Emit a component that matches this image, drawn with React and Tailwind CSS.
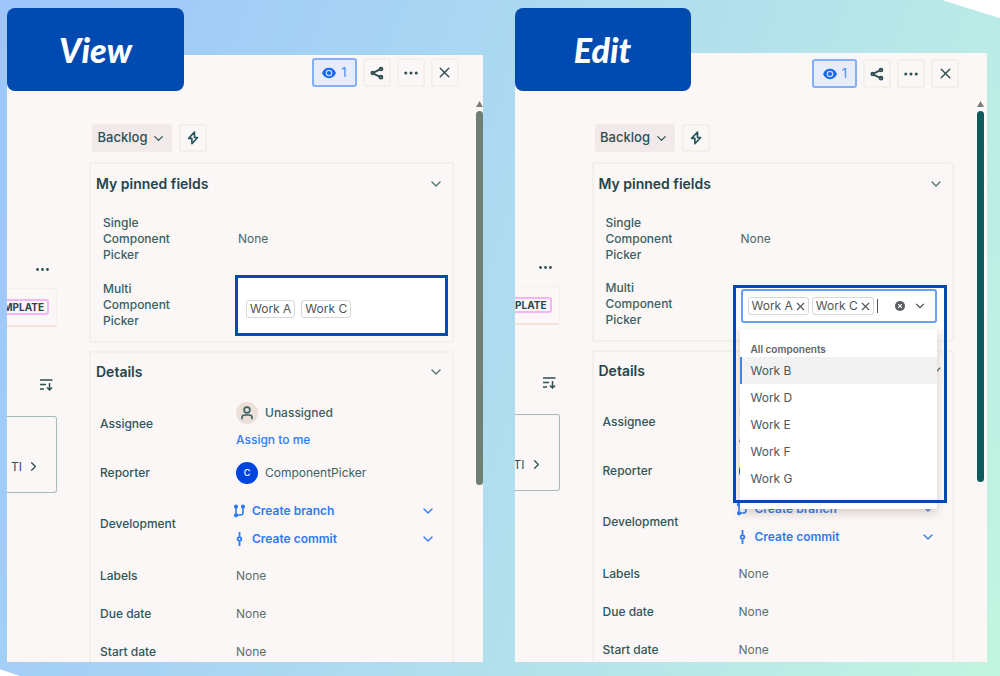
import React, { useState } from 'react';
import { ChevronDown, ChevronRight, Ellipsis, X } from 'lucide-react';

const COMPONENTS = ['Work A', 'Work B', 'Work C', 'Work D', 'Work E', 'Work F', 'Work G'];

// ===========================
// ICONS
// ===========================
function EyeIcon() {
  return (
    <svg width="16" height="16" viewBox="0 0 16 16" aria-hidden="true">
      <path d="M1 8C2.4 4.6 4.9 2.8 8 2.8S13.600 4.600 15 8c-1.400 3.400-3.900 5.200-7 5.200S2.400 11.400 1 8z" fill="#1868f2" />
      <circle cx="8" cy="8" r="2.700" fill="none" stroke="#c9dafb" strokeWidth="1.200" />
    </svg>
  );
}

function ShareIcon() {
  return (
    <svg width="16" height="16" viewBox="0 0 16 16" fill="none" stroke="currentColor" strokeWidth="1.900" aria-hidden="true">
      <path d="M5 7.400l5.500-2.800M5 8.800l5.500 2.800" />
      <circle cx="3.700" cy="8.100" r="1.300" />
      <circle cx="12" cy="4" r="1.400" />
      <circle cx="12" cy="12.200" r="1.400" />
    </svg>
  );
}

function BoltIcon() {
  return (
    <svg width="16" height="16" viewBox="0 0 16 16" fill="none" stroke="currentColor" strokeWidth="1.600" strokeLinejoin="round" aria-hidden="true">
      <path d="M9.500 2L3.600 8.400h3.300v5.400l5.700-6.300H9.500z" />
    </svg>
  );
}

function SortIcon() {
  return (
    <svg width="16" height="16" viewBox="0 0 16 16" fill="none" stroke="currentColor" strokeWidth="1.500" aria-hidden="true">
      <path d="M2 3h12.500M2 7.500h6M2 12h4" />
      <path d="M11.500 6v7M9 10.500l2.500 2.500 2.500-2.500" />
    </svg>
  );
}

function PersonIcon() {
  return (
    <svg width="16" height="16" viewBox="0 0 16 16" fill="none" stroke="currentColor" strokeWidth="1.600" aria-hidden="true">
      <circle cx="8" cy="5" r="2.900" />
      <path d="M3 14.200v-1.600c0-1.500 1.200-2.600 2.700-2.600h4.600c1.500 0 2.700 1.100 2.700 2.600v1.600" />
    </svg>
  );
}

function BranchIcon() {
  return (
    <svg width="13" height="14" viewBox="0 0 13 14" fill="none" stroke="currentColor" strokeWidth="1.600" aria-hidden="true">
      <path d="M3 3v8h4.500a2.500 2.500 0 0 0 2.500-2.500V3" />
      <circle cx="3" cy="2.700" r="1.300" fill="currentColor" />
      <circle cx="10" cy="2.700" r="1.300" fill="currentColor" />
      <circle cx="3" cy="11.300" r="1.300" fill="currentColor" />
    </svg>
  );
}

function CommitIcon() {
  return (
    <svg width="13" height="14" viewBox="0 0 13 14" fill="none" stroke="currentColor" strokeWidth="1.800" aria-hidden="true">
      <path d="M6.500 0v4.500M6.500 9.500V14" />
      <circle cx="6.500" cy="7" r="1.800" />
    </svg>
  );
}

function ClearIcon() {
  return (
    <svg width="12" height="12" viewBox="0 0 12 12" aria-hidden="true">
      <circle cx="6" cy="6" r="5" fill="#575c60" />
      <path d="M4.200 4.200l3.600 3.600M7.800 4.200L4.200 7.800" stroke="#fff" strokeWidth="1.200" />
    </svg>
  );
}

// ===========================
// PARTS
// ===========================
function Toolbar({ className }) {
  const square =
    'w-7 h-[29px] flex items-center justify-center rounded-[3px] border-2 border-[#f4efe9] text-[#2f4f52]';
  return (
    <div className={`flex justify-end ${className}`}>
      <button
        aria-label="Watchers"
        className="w-[45px] h-[29px] flex items-center justify-center gap-1 rounded-[3px] border-2 border-[#84aff8] bg-[#e8ebf8] text-[13px] text-[#4a8bf5]"
      >
        <EyeIcon />1
      </button>
      <button aria-label="Share" className={square}><ShareIcon /></button>
      <button aria-label="More" className={square}><Ellipsis size={18} /></button>
      <button aria-label="Close" className={square}><X size={17} strokeWidth={2} /></button>
    </div>
  );
}

// Slice of the board that stays visible behind the issue
function BoardEdge({ className }) {
  return (
    <div className={`shrink-0 overflow-hidden pt-[206px] text-[#2f4f52] ${className}`}>
      <div className="flex justify-end pr-1.5"><Ellipsis size={17} /></div>
      <div className="mt-2.5 h-[39px] flex items-center justify-end pr-[7px] rounded-r-[3px] border border-l-0 border-[#f4f0eb] border-b-2 border-b-[#efe3db]">
        <span className="px-[3px] rounded-[3px] border-2 border-[#f3b5f6] text-[10px] leading-3 font-bold text-[#2b474b]">
          TEMPLATE
        </span>
      </div>
      <div className="mt-[50px] flex justify-end pr-[3px]"><SortIcon /></div>
      <div className="mt-[23px] h-[77px] pt-6 flex items-center justify-end gap-1 pr-[15px] rounded-r-[3px] border border-l-0 border-[#a9b9b3] text-[12px]">
        <span>TI</span>
        <ChevronRight size={15} className="shrink-0" />
      </div>
    </div>
  );
}

function Card({ title, headClass, children }) {
  return (
    <section className="rounded-[3px] border-2 border-[#f4efe9]">
      <div className={`flex items-center justify-between pl-[5px] pr-2 pb-[3px] ${headClass}`}>
        <h2 className="text-[14px] font-semibold text-[#24444a]">{title}</h2>
        <button aria-label={`Collapse ${title}`} className="text-[#56716f]">
          <ChevronDown size={16} />
        </button>
      </div>
      {children}
    </section>
  );
}

function PinnedRow({ label, className, children }) {
  return (
    <div className={`flex items-center ${className}`}>
      <div className="w-[147px] shrink-0 pl-3">
        <p className="w-20 text-[12px] leading-4 font-medium text-[#3c5f62]">{label}</p>
      </div>
      {children}
    </div>
  );
}

function DetailRow({ label, className, children }) {
  return (
    <div className={`flex items-center ${className}`}>
      <div className="w-[145px] shrink-0 pl-[9px] text-[12px] font-medium text-[#315659]">{label}</div>
      <div className="flex-1 text-[12px] text-[#5b716f]">{children}</div>
    </div>
  );
}

function DevAction({ icon, text }) {
  return (
    <div className="h-7 flex items-center text-[#2f7bf2]">
      <a href="#dev" className="flex items-center gap-1.5 font-semibold">
        {icon}
        {text}
      </a>
      <button aria-label={`${text} options`} className="ml-auto mr-4">
        <ChevronDown size={16} />
      </button>
    </div>
  );
}

function ViewField() {
  return (
    <div className="flex-1 h-[61px] -ml-[3px] mr-1 pt-[22px] pl-2 flex items-start gap-1.5 border-[3px] border-[#004ab0] bg-white">
      {['Work A', 'Work C'].map((name) => (
        <span key={name} className="px-[3px] rounded-[3px] border border-[#d5d8d8] text-[12px] leading-4 text-[#505558]">
          {name}
        </span>
      ))}
    </div>
  );
}

function EditField() {
  const [selected, setSelected] = useState(['Work A', 'Work C']);
  const options = COMPONENTS.filter((c) => !selected.includes(c));

  return (
    <div className="relative self-stretch flex-1">
      <div className="absolute z-10 top-[14px] -left-2 right-[5px]">
        <div className="h-11 pt-1 pl-2 pr-2.5 bg-white">
          <div className="h-[34px] flex items-center gap-[3px] pl-[5px] pr-2 rounded-[3px] border-2 border-[#6b9ff5] bg-white text-[#505558]">
            {selected.map((name) => (
              <span key={name} className="shrink-0 flex items-center gap-px pl-[3px] pr-px rounded-[3px] border border-[#d5d8d8] text-[12px] leading-4">
                {name}
                <button aria-label={`Remove ${name}`} onClick={() => setSelected(selected.filter((c) => c !== name))}>
                  <X size={13} />
                </button>
              </span>
            ))}
            <input aria-label="Multi Component Picker" className="min-w-0 flex-1 h-3.5 border-l border-[#505558] text-[12px] outline-none" />
            <button aria-label="Clear" onClick={() => setSelected([])}><ClearIcon /></button>
            <ChevronDown size={14} className="ml-1" />
          </div>
        </div>
        <div className="ml-[7px] mr-2.5 pt-3 pb-[17px] rounded-[3px] bg-white shadow-[0_4px_10px_rgba(120,80,60,0.25)]">
          <p className="pl-[11px] text-[10px] leading-4 font-semibold text-[#606468]">All components</p>
          <ul>
            {options.map((name, i) => (
              <li key={name}>
                <button
                  onClick={() => setSelected([...selected, name])}
                  className={`block w-full h-[27px] pl-[9px] border-l-2 text-left text-[12px] text-[#505558] ${
                    i === 0 ? 'border-[#4a80e0] bg-[#f2f2f2]' : 'border-transparent'
                  }`}
                >
                  {name}
                </button>
              </li>
            ))}
          </ul>
        </div>
        <div className="absolute inset-x-0 top-0 bottom-1.5 border-[3px] border-[#004ab0] pointer-events-none" />
      </div>
    </div>
  );
}

function Scrollbar({ className, thumbClass }) {
  return (
    <div className={`shrink-0 w-[7px] flex flex-col items-center gap-1 ${className}`}>
      <svg width="7" height="6" viewBox="0 0 7 6" aria-hidden="true">
        <path d="M3.500 0L7 6H0z" fill="#7a7f78" />
      </svg>
      <div className={`w-full rounded-full ${thumbClass}`} />
    </div>
  );
}

function IssueScreen({ mode }) {
  const editing = mode === 'edit';
  const pinnedRow = editing ? 'h-[65px]' : 'h-[66px]';

  return (
    <section className={`min-w-0 flex flex-col ${editing ? 'flex-[472]' : 'flex-[475]'}`}>
      <h1
        className={`relative z-20 h-[83px] flex items-center justify-center rounded-lg bg-[#004ab0] text-white font-['Lato'] text-[34px] font-black italic ${
          editing ? 'w-44 -mb-[38px]' : 'w-[177px] -mb-9'
        }`}
      >
        {editing ? 'Edit' : 'View'}
      </h1>
      <div className="flex-1 min-h-0 flex overflow-hidden bg-[#faf7f6]">
        <BoardEdge className={editing ? 'w-[45px]' : 'w-[50px]'} />
        <div className="flex-1 min-w-0 ml-8">
          <Toolbar className={editing ? 'pt-1.5 gap-1.5' : 'pt-[3px] gap-1.5'} />
          <div className={`ml-[3px] flex gap-[7px] ${editing ? 'mt-9' : 'mt-[37px]'}`}>
            <button className="w-20 h-7 flex items-center justify-center gap-1 rounded-[3px] bg-[#f2eaea] text-[13px] font-medium text-[#2f4f52]">
              Backlog
              <ChevronDown size={15} />
            </button>
            <button aria-label="Actions" className="w-7 h-7 flex items-center justify-center rounded-[3px] border-2 border-[#f4efe9] text-[#24555a]">
              <BoltIcon />
            </button>
          </div>

          <div className="mt-2.5 mr-[5px] flex flex-col gap-2">
            <Card title="My pinned fields" headClass="h-[42px]">
              <PinnedRow label="Single Component Picker" className={pinnedRow}>
                <span className="text-[12px] text-[#4d6765]">None</span>
              </PinnedRow>
              <PinnedRow label="Multi Component Picker" className={`${editing ? 'mb-1' : 'mb-[3px]'} ${pinnedRow}`}>
                {editing ? <EditField /> : <ViewField />}
              </PinnedRow>
            </Card>

            <Card title="Details" headClass={editing ? 'h-[39px]' : 'h-10'}>
              <DetailRow label="Assignee" className="h-[62px]">
                <div className="pt-1 flex items-center gap-[7px] text-[#3c5f62]">
                  <span className="w-[22px] h-[22px] flex items-center justify-center rounded-full bg-[#ecdfd8]">
                    <PersonIcon />
                  </span>
                  <span className="font-medium">Unassigned</span>
                </div>
                <a href="#assign" className="mt-1.5 block leading-5 font-medium text-[#2f7bf2]">Assign to me</a>
              </DetailRow>
              <DetailRow label="Reporter" className="h-9">
                <div className="flex items-center gap-[7px] text-[#3c5f62]">
                  <span className="w-[22px] h-[22px] flex items-center justify-center rounded-full bg-[#0044e0] text-[9px] font-medium text-white">
                    C
                  </span>
                  ComponentPicker
                </div>
              </DetailRow>
              <DetailRow label="Development" className="h-[66px]">
                <div className="-ml-[3px] pt-0.5">
                  <DevAction icon={<BranchIcon />} text="Create branch" />
                  <DevAction icon={<CommitIcon />} text="Create commit" />
                </div>
              </DetailRow>
              <DetailRow label="Labels" className="h-[38px]">None</DetailRow>
              <DetailRow label="Due date" className="h-[38px]">None</DetailRow>
              <DetailRow label="Start date" className="h-[38px]">None</DetailRow>
            </Card>
          </div>
        </div>
        <Scrollbar
          className={editing ? 'ml-[18px] mr-[3px] pt-12' : 'ml-[17px] pt-[46px]'}
          thumbClass={editing ? 'h-[371px] bg-[#0b5a5c]' : 'h-[374px] bg-[#6f7f73]'}
        />
      </div>
    </section>
  );
}

function App() {
  return (
    <div className="h-screen bg-white font-['Inter',sans-serif]">
      <main className="h-full flex gap-8 pt-2 pb-3.5 pl-[7px] pr-[13px] bg-linear-110 from-[#9dc5fb] via-[#aedcef] to-[#c2f5e0] [clip-path:polygon(0_0,94.2%_0,100%_2.7%,100%_100%,2%_100%,0_99%)]">
        <IssueScreen mode="view" />
        <IssueScreen mode="edit" />
      </main>
    </div>
  );
}

export default App;
